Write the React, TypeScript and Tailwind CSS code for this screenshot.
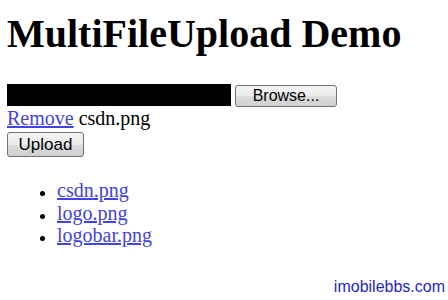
const files = ["csdn.png", "logo.png", "logobar.png"]

const serif = "font-['Liberation_Serif','Times_New_Roman',serif]"
const sans = "font-['Liberation_Sans',Arial,sans-serif]"

function OldButton({ label, className }: { label: string; className: string }) {
  return (
    <button
      className={`${sans} flex items-center justify-center rounded-[3px] border border-[#707070] bg-[linear-gradient(to_bottom,#f4f4f4_0%,#ebebeb_50%,#dddddd_51%,#cfcfcf_100%)] text-[16px] leading-none text-black ${className}`}
    >
      {label}
    </button>
  )
}

export default function App() {
  return (
    <div className={`relative h-[300px] w-[448px] overflow-hidden bg-white pl-[7px] text-black ${serif}`}>
      <h1 className="mt-[12px] text-[40px] font-bold leading-[44px]">MultiFileUpload Demo</h1>

      <div className="mt-[28px] flex items-start">
        <div className="h-[22px] w-[224px] bg-black" />
        <OldButton label="Browse..." className="ml-[4px] mt-[1px] h-[22px] w-[102px]" />
      </div>

      <div className="text-[20px] leading-[22px]">
        <a href="#" className="text-[#4343e2] underline">
          Remove
        </a>{" "}
        csdn.png
      </div>

      <OldButton label="Upload" className="mt-[3px] h-[25px] w-[77px] text-[17px]" />

      <ul className="mt-[22px]">
        {files.map((name) => (
          <li key={name} className="flex h-[22.5px] items-start text-[20px] leading-[22.5px]">
            <span className="ml-[33px] mt-[12px] h-[5px] w-[5px] rounded-full bg-black" />
            <a href="#" className="ml-[12px] text-[#4343e2] underline">
              {name}
            </a>
          </li>
        ))}
      </ul>

      <div className={`absolute bottom-[4px] right-[3px] ${sans} text-[16px] leading-[18px] text-[#1f1fc8]`}>
        imobilebbs.com
      </div>
    </div>
  )
}
